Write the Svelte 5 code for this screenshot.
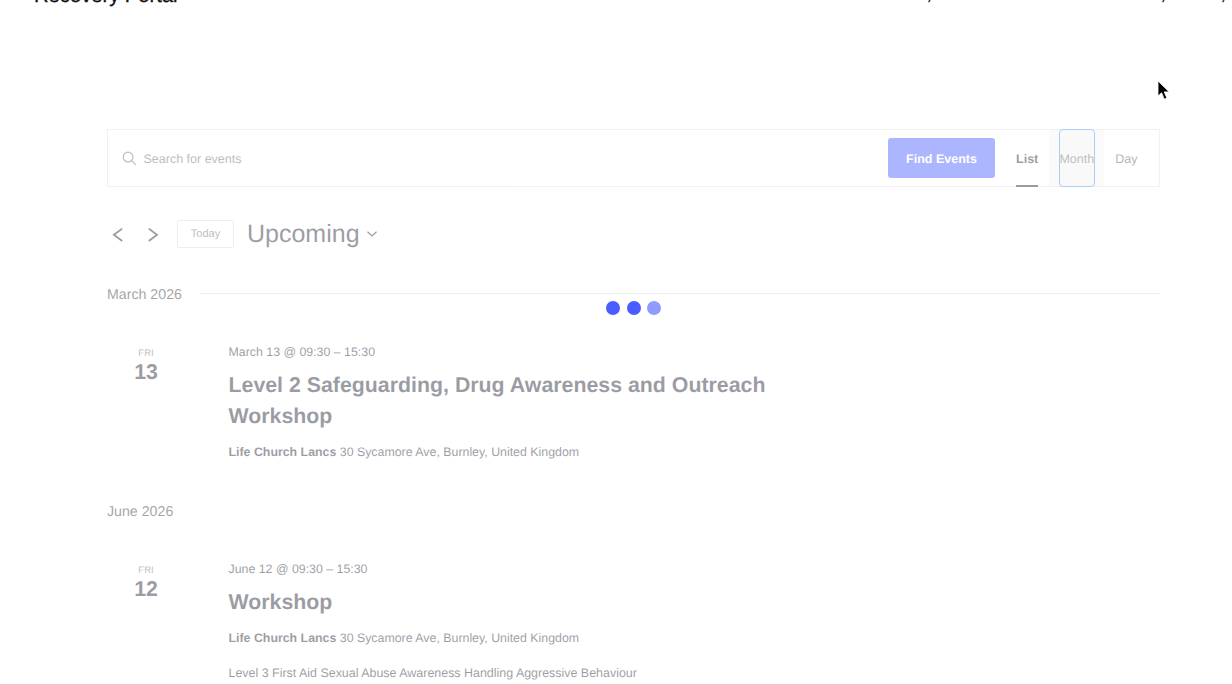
<script>
  const months = [
    {
      label: 'March 2026',
      line: true,
      events: [
        {
          dow: 'FRI', day: '13', time: 'March 13 @ 09:30 – 15:30',
          title: 'Level 2 Safeguarding, Drug Awareness and Outreach Workshop',
          venue: 'Life Church Lancs', addr: '30 Sycamore Ave, Burnley, United Kingdom', desc: ''
        }
      ]
    },
    {
      label: 'June 2026',
      line: false,
      events: [
        {
          dow: 'FRI', day: '12', time: 'June 12 @ 09:30 – 15:30',
          title: 'Workshop',
          venue: 'Life Church Lancs', addr: '30 Sycamore Ave, Burnley, United Kingdom',
          desc: 'Level 3 First Aid Sexual Abuse Awareness Handling Aggressive Behaviour'
        }
      ]
    }
  ];
</script>

<div class="viewport">
  <header class="site">
    <div class="brand">Recovery Portal</div>
    <nav class="topnav"><i class="s1">/</i><i class="s2">/</i><i class="s3">/</i></nav>
  </header>

  <main class="events">
    <div class="bar">
      <div class="search">
        <svg class="mag" width="15" height="15" viewBox="0 0 16 16" fill="none" stroke="#5d5d5d" stroke-width="1.3">
          <circle cx="6.5" cy="6.5" r="5.2" /><path d="M10.3 10.3 14.8 14.8" />
        </svg>
        <span>Search for events</span>
      </div>
      <button class="find"><span>Find Events</span></button>
      <div class="views">
        <div class="view active">List</div>
        <div class="monthwrap"><div class="monthbox">Month</div></div>
        <div class="view day">Day</div>
      </div>
    </div>

    <div class="pager">
      <svg class="chev" width="12" height="18" viewBox="0 0 12 18" fill="none" stroke="#080b1b" stroke-width="1.8"><path d="M10.2 3.6 1.9 9.8l8.3 6.2" /></svg>
      <svg class="chev next" width="12" height="18" viewBox="0 0 12 18" fill="none" stroke="#080b1b" stroke-width="1.8"><path d="M1.8 3.6 10 9.8 1.8 16" /></svg>
      <button class="today">Today</button>
      <div class="upcoming">Upcoming</div>
      <svg class="caret" width="10" height="6" viewBox="0 0 10 6" fill="none" stroke="#080b1b" stroke-width="1.2"><path d="M.5.8 5 5 9.5.8" /></svg>
    </div>

    {#each months as m}
      <section class="month">
        <div class="mhead">
          <span>{m.label}</span>
          {#if m.line}<div class="rule"></div>{/if}
        </div>
        {#each m.events as e}
          <article class="event">
            <div class="date">
              <div class="dow">{e.dow}</div>
              <div class="num">{e.day}</div>
            </div>
            <div class="body">
              <div class="time">{e.time}</div>
              <h3>{e.title}</h3>
              <div class="venue"><b>{e.venue}</b> {e.addr}</div>
              {#if e.desc}<p class="desc">{e.desc}</p>{/if}
            </div>
          </article>
        {/each}
      </section>
    {/each}
  </main>

  <div class="dots"><span></span><span></span><span class="light"></span></div>

  <svg class="cursor" width="14" height="22" viewBox="0 0 14 22">
    <path d="M1 1v15l3.6-3.2 2.7 6.4 2.6-1.1-2.7-6.2h5z" fill="#000" stroke="#fff" stroke-width=".8" />
  </svg>
</div>

<style>
  :global(body) {
    margin: 0;
    background: #fff;
  }
  .viewport {
    position: relative;
    width: 1232px;
    height: 684px;
    overflow: hidden;
    font-family: "Liberation Sans", Arial, sans-serif;
    color: #080b1b;
    text-rendering: geometricPrecision;
  }
  button { text-rendering: geometricPrecision; }
  .site {
    height: 129px;
    position: relative;
  }
  .brand {
    position: absolute;
    left: 34px;
    top: -16px;
    font-size: 20.2px;
    line-height: 24px;
    color: #111;
    white-space: nowrap;
    -webkit-text-stroke: 0.3px #111;
  }
  .topnav i {
    position: absolute;
    top: -14px;
    font-size: 18px;
    line-height: 20px;
    color: #222;
  }
  .s1 { left: 929px; }
  .s2 { left: 1163px; }
  .s3 { left: 1223px; }
  .events {
    margin-left: 107px;
    width: 1053px;
    opacity: 0.4;
  }
  .bar {
    display: flex;
    align-items: center;
    height: 58px;
    box-sizing: border-box;
    border: 1px solid #dedee0;
    position: relative;
  }
  .search {
    flex: 1;
    display: flex;
    align-items: center;
    gap: 7px;
    padding-left: 13.5px;
    font-size: 12.5px;
    color: #5d5d5d;
  }
  .search span { padding-top: 2px; }
  .find {
    width: 107px;
    height: 40px;
    border: 0;
    border-radius: 3px;
    background: #334aff;
    color: #fff;
    font: bold 12.5px "Liberation Sans", Arial, sans-serif;
    padding: 2px 0 0;
    margin-right: 21px;
  }
  .views {
    display: flex;
    align-items: center;
    height: 56px;
    font-size: 12.5px;
    margin-right: 21.5px;
  }
  .view {
    height: 56px;
    line-height: 58px;
    box-sizing: border-box;
  }
  .active {
    font-weight: bold;
    position: relative;
  }
  .active::after {
    content: "";
    position: absolute;
    left: 0;
    right: 0;
    bottom: -1px;
    height: 2px;
    background: #080b1b;
  }
  .monthwrap {
    margin-left: 11px;
    width: 55px;
    height: 56px;
    background: #f5f5f5;
    display: flex;
    justify-content: center;
    position: relative;
  }
  .monthbox {
    width: 36px;
    height: 58px;
    margin-top: -1px;
    flex: none;
    box-sizing: border-box;
    border: 1px solid #2d89e6;
    border-radius: 4px;
    font-size: 12.5px;
    line-height: 58px;
    color: #5d5d5d;
    display: flex;
    justify-content: center;
    white-space: nowrap;
    background: #f2f2f2;
  }
  .day {
    margin-left: 11px;
    color: #454545;
  }
  .pager {
    display: flex;
    align-items: center;
    height: 28px;
    margin-top: 33px;
  }
  .chev { margin-left: 5px; margin-top: -1px; }
  .chev.next { margin-left: 23px; }
  .today {
    margin-left: 18px;
    width: 57px;
    height: 28px;
    box-sizing: border-box;
    background: #fff;
    border: 1px solid #d5d5d5;
    border-radius: 2px;
    color: #5d5d5d;
    font: 11px "Liberation Sans", Arial, sans-serif;
    padding: 0;
  }
  .upcoming {
    margin-left: 13px;
    font-size: 25px;
    line-height: 26px;
    margin-top: 0;
  }
  .caret { margin-left: 7px; margin-top: -1px; }
  .month { margin-top: 36px; }
  .month + .month { margin-top: 42px; }
  .mhead {
    display: flex;
    align-items: center;
    gap: 18px;
    height: 20px;
    font-size: 14.2px;
    line-height: 20px;
    color: #202026;
  }
  .mhead span { padding-top: 2px; }
  .rule {
    flex: 1;
    height: 1px;
    background: #d5d5d9;
    margin-top: -1px;
  }
  .event {
    display: flex;
    margin-top: 41px;
  }
  .date {
    width: 78px;
    margin-right: 43.5px;
    text-align: center;
  }
  .dow {
    font-size: 9.5px;
    line-height: 10px;
    color: #5d5d5d;
    margin-top: 4px;
  }
  .num {
    font-size: 21.33px;
    font-weight: bold;
    line-height: 26px;
    margin-top: 0;
  }
  .body { width: 560px; }
  .time {
    font-size: 12.37px;
    line-height: 14px;
  }
  h3 {
    margin: 11px 0 0;
    font-size: 21.33px;
    line-height: 31px;
    font-weight: bold;
  }
  .venue {
    margin-top: 13px;
    font-size: 12.37px;
    line-height: 14px;
  }
  .desc {
    margin: 21px 0 0;
    font-size: 12.44px;
    line-height: 14px;
  }
  .dots {
    position: absolute;
    left: 606px;
    top: 301px;
    display: flex;
    gap: 6.5px;
  }
  .dots span {
    width: 14px;
    height: 14px;
    border-radius: 50%;
    background: #4a5cff;
  }
  .dots .light { background: #8f9bff; }
  .cursor {
    position: absolute;
    left: 1156.5px;
    top: 80px;
  }
</style>
